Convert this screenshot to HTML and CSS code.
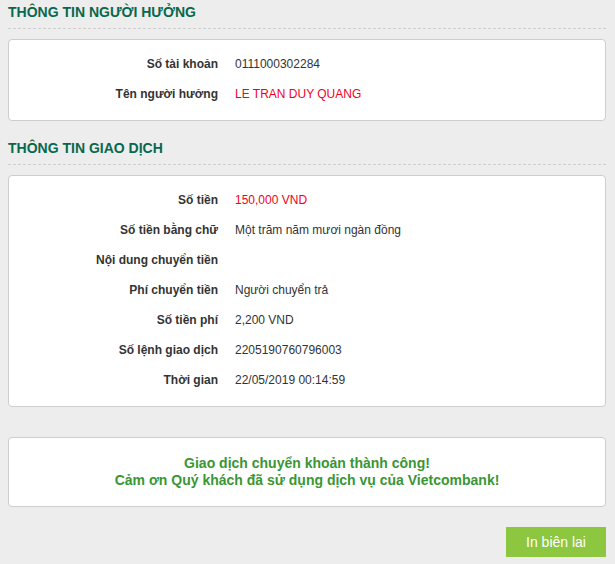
FILE: index.html
```html
<!DOCTYPE html>
<html lang="vi">
  <head>
    <meta charset="UTF-8" />
    <meta name="viewport" content="width=device-width, initial-scale=1.0" />
    <title>Chuyển khoản thành công</title>
    <link rel="stylesheet" href="styles.css">
  </head>

  <body>
    <div class="wrapper">
      <div class="section">
        <h2 class="section-title">THÔNG TIN NGƯỜI HƯỞNG</h2>
        <div class="box">
          <div class="row">
            <div class="label">Số tài khoản</div>
            <div class="value">0111000302284</div>
          </div>
          <div class="row">
            <div class="label">Tên người hưởng</div>
            <div class="value red">LE TRAN DUY QUANG</div>
          </div>
        </div>
      </div>

      <div class="section">
        <h2 class="section-title">THÔNG TIN GIAO DỊCH</h2>
        <div class="box">
          <div class="row">
            <div class="label">Số tiền</div>
            <div class="value red">150,000 VND</div>
          </div>
          <div class="row">
            <div class="label">Số tiền bằng chữ</div>
            <div class="value">Một trăm năm mươi ngàn đồng</div>
          </div>
          <div class="row">
            <div class="label">Nội dung chuyển tiền</div>
            <div class="value"></div>
          </div>
          <div class="row">
            <div class="label">Phí chuyển tiền</div>
            <div class="value">Người chuyển trả</div>
          </div>
          <div class="row">
            <div class="label">Số tiền phí</div>
            <div class="value">2,200 VND</div>
          </div>
          <div class="row">
            <div class="label">Số lệnh giao dịch</div>
            <div class="value">2205190760796003</div>
          </div>
          <div class="row">
            <div class="label">Thời gian</div>
            <div class="value">22/05/2019 00:14:59</div>
          </div>
        </div>
      </div>

      <div class="message">
        <p>Giao dịch chuyển khoản thành công!</p>
        <p>Cảm ơn Quý khách đã sử dụng dịch vụ của Vietcombank!</p>
      </div>

      <div class="actions">
        <button type="button" class="btn-print">In biên lai</button>
      </div>
    </div>
  </body>
</html>
```

FILE: styles.css
```css
body {
  font-family: "Liberation Sans", Arial, sans-serif;
  background-color: #ededed;
  color: #333;
  margin: 0;
  padding: 0;
}

.wrapper {
  width: 598px;
  margin-left: 8px;
}

.section {
  margin-bottom: 15px;
}

.section-title {
  margin: 0 0 10px;
  padding: 2px 0 6px;
  font-size: 14px;
  line-height: 20px;
  font-weight: bold;
  color: #07684d;
  border-bottom: 1px dashed #cfcfcf;
}

.box {
  background-color: #fff;
  border: 1px solid #cdcdcd;
  border-radius: 4px;
  padding: 9px 0 11px;
}

.row {
  display: grid;
  grid-template-columns: 209px 1fr;
  column-gap: 17px;
  height: 30px;
  align-items: center;
  font-size: 12px;
}

.label {
  text-align: right;
  font-weight: bold;
}

.value.red {
  color: #f2001e;
}

.message {
  margin-top: 30px;
  background-color: #fff;
  border: 1px solid #cdcdcd;
  border-radius: 4px;
  height: 68px;
  display: flex;
  flex-direction: column;
  justify-content: center;
  text-align: center;
  font-size: 14px;
  font-weight: bold;
  color: #3a9634;
}

.message p {
  margin: 0;
  line-height: 17px;
}

.actions {
  display: flex;
  justify-content: flex-end;
  margin-top: 20px;
}

.btn-print {
  width: 100px;
  height: 30px;
  background-color: #8dc63f;
  color: #fff;
  border: none;
  font-family: "Liberation Sans", Arial, sans-serif;
  font-size: 14px;
  cursor: pointer;
}
```
